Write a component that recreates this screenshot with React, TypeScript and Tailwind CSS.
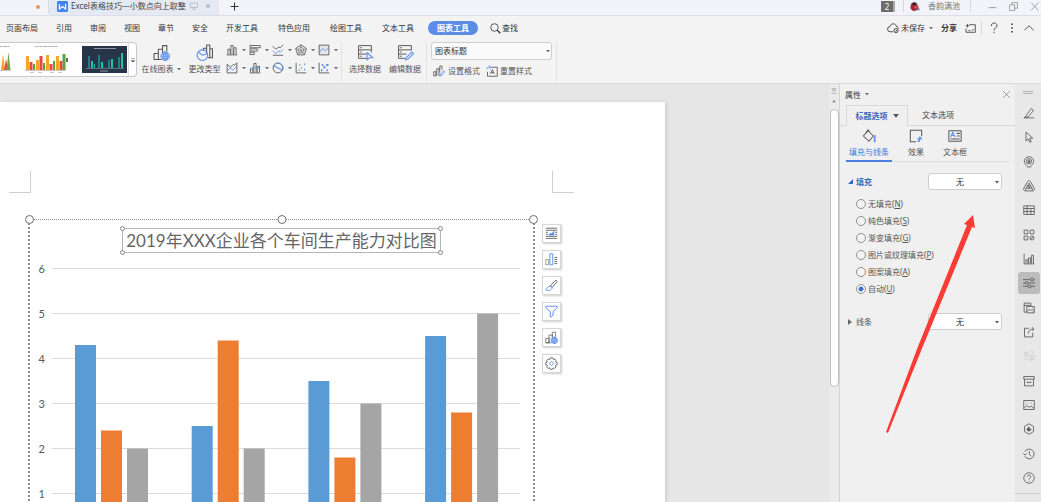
import { useState, type ReactNode } from 'react';

interface IconProps {
  children: ReactNode;
  className?: string;
}

function Icon({ children, className = 'size-3' }: IconProps) {
  return (
    <svg
      viewBox="0 0 16 16"
      fill="none"
      stroke="currentColor"
      strokeWidth={1.15}
      strokeLinejoin="round"
      className={`shrink-0 ${className}`}
      aria-hidden="true"
    >
      {children}
    </svg>
  );
}

function Caret({ className = 'w-1 text-gray-500' }: { className?: string }) {
  return (
    <svg viewBox="0 0 8 5" className={`shrink-0 ${className}`} aria-hidden="true">
      <path d="M0 0h8L4 5z" fill="currentColor" />
    </svg>
  );
}

const blue = '#5b8def';

const menuLeft = ['页面布局', '引用', '审阅', '视图', '章节', '安全'];
const menuRight = ['开发工具', '特色应用', '绘图工具', '文本工具'];

const chartTypes: { name: string; icon: ReactNode }[] = [
  { name: '柱形图', icon: <path d="M1 14.500h14M2.500 14V7h3v7M6.500 14V2h3v12M10.500 14V5h3v9" /> },
  { name: '条形图', icon: <path d="M1.500 1v14M2 2h13v3H2M2 6.500h9v3H2M2 11h5v3H2" /> },
  {
    name: '折线图',
    icon: (
      <>
        <path d="M1 3l4 4 4-3 2 1 4-4" />
        <path d="M1 9l4 4 4-4 2 2 4-4" stroke={blue} />
        <path d="M1 15h14" />
      </>
    ),
  },
  {
    name: '雷达图',
    icon: (
      <>
        <path d="M8 1l7 5-2.500 8.500h-9L1 6z" />
        <path d="M8 4l4 3-1.500 5h-5L4 7zM8 1v8M15 6L8 9M1 6l7 3M3.500 14.500L8 9l4.500 5.500" strokeWidth={0.8} />
      </>
    ),
  },
  {
    name: '组合图',
    icon: (
      <>
        <path d="M1.500 1.500h13v13h-13z" fill="#e6e6e6" />
        <path d="M2 11l4-5 4 3 4-4" stroke={blue} />
      </>
    ),
  },
  {
    name: '面积图',
    icon: (
      <>
        <path d="M1.500 14.500V3L6 7l4-4 1.500 1.500L14.500 1v13.500z" />
        <path d="M2 11l4-3 3 3 5-5" stroke={blue} />
      </>
    ),
  },
  {
    name: '簇状图',
    icon: (
      <>
        <path d="M1 14.500h14M2 14V9h3v5M6.500 14V2h3v12M11 14V6h3v8" />
        <path d="M1 10l5-4 5 4 4-5" stroke={blue} />
      </>
    ),
  },
  {
    name: '饼图',
    icon: (
      <>
        <circle cx="8" cy="8" r="6.500" />
        <path d="M2 5l6 3 6 3M8 1.500A6.500 6.500 0 0 1 14 11L8 8 2 5a6.500 6.500 0 0 1 6-3.500" stroke={blue} />
      </>
    ),
  },
  {
    name: '散点图',
    icon: (
      <>
        <path d="M1.500 1v13.500H15" />
        <path d="M5 11h1.500M8 8h1.500M12 10h1.500M6 4h1.500M12 3h1.500" stroke={blue} strokeWidth={1.800} />
      </>
    ),
  },
  {
    name: '气泡图',
    icon: (
      <>
        <path d="M1.500 1v13.500H15" />
        <path d="M4 11h2M7 7h3M11 11h2M5 4h2M11 4h3" stroke={blue} strokeWidth={2.400} />
      </>
    ),
  },
];

const onlineChart = (
  <>
    <path d="M1 14.500V9h4v5.500zM5 14.500V5h4v5M9 7V1.500h4V7M1 14.500h7" strokeWidth={1} />
    <g stroke={blue} strokeWidth={0.900}>
      <circle cx="11.500" cy="11.500" r="4" fill="#dfe9fc" />
      <path d="M7.500 11.500h8M11.500 7.500v8M8.500 9.500h6M8.500 13.500h6" />
      <ellipse cx="11.500" cy="11.500" rx="2" ry="4" />
    </g>
  </>
);

const changeType = (
  <>
    <path d="M7 6V4h3v5M10 5V1h3v12M13 4.500h2.500V13H11" strokeWidth={1} />
    <g stroke={blue} strokeWidth={1}>
      <circle cx="6" cy="10.500" r="5" />
      <path d="M2 7.500l4 3 5-1.500" />
    </g>
  </>
);

const selectData = (
  <>
    <path d="M9 13.500H1.500v-12h12V8M1.500 5.500h12M1.500 9.500H9M3 3.500h1.500M3 7.500h1.500M3 11.500h1.500" strokeWidth={0.9} />
    <path d="M9.500 8v7l2-2h3.500z" stroke={blue} fill="#f3f3f3" strokeWidth={1} />
  </>
);

const editData = (
  <>
    <path d="M8 13.500H1.500v-12h12V6M1.500 5.500h12M1.500 9.500H9M3 3.500h1.500M3 7.500h1.500M3 11.500h1.500" strokeWidth={0.9} />
    <path d="M8 15l1-2.500 5-5L15.500 9l-5 5z" stroke={blue} fill="#f3f3f3" strokeWidth={1} />
  </>
);

const floatTools: { name: string; icon: ReactNode }[] = [
  {
    name: '布局选项',
    icon: (
      <>
        <path d="M1 1.500h14M1 4h14M1 6.500h2.500M12.500 6.500H15M1 9h2.500M12.500 9H15M1 11.500h14M1 14h14" />
        <path d="M5 10c1-4 3 0 6-5v5z" stroke={blue} fill={blue} strokeWidth={0.600} />
      </>
    ),
  },
  {
    name: '图表元素',
    icon: (
      <>
        <path d="M1 14.500V8h3.500v6.500z" stroke="#999" />
        <path d="M6 14.500V1h3.500v13.500z" stroke={blue} />
        <path d="M11.500 5.500H15M11.500 8H15M11.500 10.500H15M11.500 13H15" />
      </>
    ),
  },
  {
    name: '图表样式',
    icon: (
      <>
        <path d="M6.500 8.500L12.500 2c1-1 3 0 2 1.500L9 10.500z" />
        <path d="M6.500 8.500c-3 0-3 2.500-5.500 5 3 1.500 7 .5 8-3z" stroke={blue} />
      </>
    ),
  },
  { name: '图表筛选器', icon: <path d="M1 1.500h14v2L10 8v4.500L6.500 15V8L1 3.500z" stroke={blue} /> },
  { name: '在线图表', icon: onlineChart },
  {
    name: '设置图表区域格式',
    icon: (
      <>
        <path d="M6.500 1h3l.7 2 2-.5 1.500 2-.7 1.700 2 .8v2.500l-2 .8.7 2-1.800 1.700-2-.6-.7 1.800h-2.700l-.8-1.900-2 .7-1.700-1.800.8-1.900-1.800-.8V7l1.800-.7L2 4.300l1.900-1.700 2 .6z" />
        <path d="M8 5.200L10.800 8 8 10.800 5.200 8z" stroke={blue} />
      </>
    ),
  },
];

const railTools: { name: string; icon: ReactNode; active?: boolean; disabled?: boolean }[] = [
  { name: '样式', icon: <path d="M1 14.500h14M4 11.500L11 2l3 2.500-7 8.500-5 1zM5 14l2-1" /> },
  { name: '选择', icon: <path d="M4 1.500v12l3-3 2 4.500 2-1-2-4.500h4z" /> },
  {
    name: '推荐',
    icon: (
      <>
        <path d="M5 14.500h6M5.500 12.800a6.200 6.200 0 1 1 5 0" />
        <circle cx="8" cy="7" r="3.500" />
        <path d="M8 5l.7 1.400 1.500.2-1.100 1 .3 1.500L8 8.400l-1.400.7.3-1.500-1.100-1 1.500-.2z" fill="currentColor" strokeWidth={0.500} />
      </>
    ),
  },
  {
    name: '形状',
    icon: (
      <>
        <path d="M8 1c1.500 0 2 1 2.500 2L15 11c.7 2-.5 3.500-2 3.500H3c-1.500 0-2.700-1.500-2-3.500l4.500-8C6 2 6.500 1 8 1z" />
        <path d="M8 4L4 11h8zM6 7.500h4M6 7.500L8 11l2-3.500M3 11l1 3M13 11l-1 3" />
      </>
    ),
  },
  { name: '表格', icon: <path d="M1 2.500h14v11.500H1zM1 6h14M1 10h14M5.500 2.500V14M10.500 6v8" /> },
  {
    name: '应用',
    icon: (
      <>
        <path d="M1.500 1.500h5v5h-5zM9.500 1.500h5v5h-5zM1.500 9.500h5v5h-5z" />
        <circle cx="12" cy="12" r="2.700" />
        <path d="M10 14l4-4" />
      </>
    ),
  },
  { name: '图表', icon: <path d="M1.500 1v13.500H15M4 14V9h2.500v5M7.500 14V6.500H10V14M11.500 14V3H14v11" /> },
  {
    name: '属性',
    active: true,
    icon: (
      <>
        <path d="M0 3.500h10M14 3.500h2M0 8h3M7 8h9M0 12.500h7M11 12.500h5" />
        <circle cx="12" cy="3.500" r="2" />
        <circle cx="5" cy="8" r="2" />
        <circle cx="9" cy="12.500" r="2" />
      </>
    ),
  },
  { name: '素材', icon: <path d="M4 13.500H1.500v-12h9V5M1.500 4.500h9M5 6h10v8.500H5zM5.500 13l3-3.500 2 2 1.500-1.500 3 3M12.500 8.200h.8" /> },
  { name: '分享', icon: <path d="M8 3H2v11.500h11V9M7 10c0-4 3-6 7.500-6M12 1.500L14.500 4 12 6.500" /> },
  { name: '翻译', disabled: true, icon: <path d="M1 3h5v5H2V5.500h4M8 8h7v4H8zM11.500 6v9M10 2h3v3M3 10v3h3" /> },
  { name: '归档', icon: <path d="M1 2h14v3.500H1zM2 5.500v9h12v-9M5.500 8.500v1.500h5V8.500" /> },
  { name: '图片', icon: <path d="M1 2h14v12H1zM1.500 12.500L5 8.500l3 2.500 3-1.500 3.500 3M5 5.500h1M10.500 5.500h1" /> },
  {
    name: '安全',
    icon: (
      <>
        <path d="M8 1l6 3.500v7L8 15l-6-3.500v-7z" />
        <path d="M5 9l3-4v2.500l3 1L8 11z" fill="currentColor" />
      </>
    ),
  },
  { name: '历史', icon: <path d="M2.500 5A6.500 6.500 0 1 1 2.500 11M.5 7l2 2.500L5 7.500M8.500 4v4.500L11 11" /> },
  {
    name: '帮助',
    icon: (
      <>
        <circle cx="8" cy="8" r="7" />
        <path d="M5.800 6.300c0-3 4.500-3 4.500 0C10.300 8 8 8 8 10M8 11.500v1.200" />
      </>
    ),
  },
];

const fillOptions: [string, string][] = [
  ['无填充', 'N'],
  ['纯色填充', 'S'],
  ['渐变填充', 'G'],
  ['图片或纹理填充', 'P'],
  ['图案填充', 'A'],
  ['自动', 'U'],
];

const series = [
  { color: '#5b9bd5', values: [4.3, 2.5, 3.5, 4.5] },
  { color: '#ed7d31', values: [2.4, 4.4, 1.8, 2.8] },
  { color: '#a5a5a5', values: [2, 2, 3, 5] },
];

function TitleBar() {
  return (
    <header className="flex h-4 shrink-0 items-start border-b border-[#dcdfe8] bg-[#f2f4f9] text-[#444]">
      <div className="flex h-[13px] w-[49px] items-center justify-end border-r border-[#d8dbe4] pr-2">
        <span className="size-1 rounded-full bg-[#e8975a]" />
      </div>
      <div className="flex h-[15px] w-[170px] items-center bg-[#e5e9f3] pb-[3px] pl-2">
        <svg viewBox="0 0 16 16" className="mr-[3px] size-[11px] shrink-0" aria-hidden="true">
          <rect width="16" height="16" rx="2" fill="#3f86f0" />
          <path d="M3.500 4.500v7L8 8l4.500 3.500v-7" fill="none" stroke="#fff" strokeWidth="1.800" />
        </svg>
        <span className="whitespace-nowrap">Excel表格技巧---小数点向上取整</span>
        <Icon className="ml-1 size-2 text-gray-400">
          <path d="M1 2h14v9H1zM8 11v3M5 14.500h6" />
        </Icon>
        <span className="ml-2 size-1 rounded-full bg-[#b9bdc8]" />
      </div>
      <button type="button" aria-label="新建" className="ml-[11px] h-3">
        <Icon className="size-[9px] text-[#333]">
          <path d="M8 1v14M1 8h14" strokeWidth={1.800} />
        </Icon>
      </button>
      <div className="ml-auto flex h-3 items-center">
        <span className="h-[11px] w-3 bg-[#6d6d6d] text-center text-white">2</span>
        <span className="mr-2 h-[11px] w-[2px] bg-[#a8a8a8]" />
        <span className="h-3 border-l border-[#d5d8e0]" />
        <svg viewBox="0 0 16 16" className="ml-[5px] size-[11px]" aria-hidden="true">
          <circle cx="8" cy="8" r="7.500" fill="#dfe3ee" />
          <path d="M3 5c1-4 8-4 9 0l2 5-4 4H5L2 10z" fill="#a3282f" />
          <path d="M4 4c2-3 6-2 7 0L8 7z" fill="#2d2431" />
          <circle cx="10" cy="9" r="2" fill="#e8535a" />
          <path d="M11 12l4-2v4z" fill="#4779c4" />
        </svg>
        <span className="ml-2 text-[#777]">香韵满池</span>
        <span className="ml-[10px] h-3 border-l border-[#d5d8e0]" />
        <div className="ml-[17px] mr-[2px] flex items-center gap-3 text-[#777]">
          <button type="button" aria-label="最小化">
            <Icon className="size-[9px]"><path d="M1 10h14" /></Icon>
          </button>
          <button type="button" aria-label="还原">
            <Icon className="size-[9px]"><path d="M1 5h9v10H1zM5 5V1h10v10h-5" /></Icon>
          </button>
          <button type="button" aria-label="关闭">
            <Icon className="size-[9px]"><path d="M2 1l13 14M15 1L2 15" /></Icon>
          </button>
        </div>
      </div>
    </header>
  );
}

function MenuBar() {
  return (
    <nav className="flex h-6 shrink-0 items-center whitespace-nowrap pl-[6px] text-[#333]">
      <div className="flex gap-[18px]">
        {menuLeft.map((m) => (
          <button type="button" key={m}>{m}</button>
        ))}
      </div>
      <div className="ml-[18px] flex gap-5">
        {menuRight.map((m) => (
          <button type="button" key={m}>{m}</button>
        ))}
      </div>
      <button type="button" className="ml-[14px] h-[14px] rounded-full bg-[#5b8de6] px-[9px] font-bold text-white">
        图表工具
      </button>
      <button type="button" className="ml-3 flex items-center gap-px">
        <Icon className="size-[11px]">
          <circle cx="6.500" cy="6.500" r="5.500" />
          <path d="M10.500 10.500L15 15" strokeWidth={1.800} />
        </Icon>
        查找
      </button>
      <div className="ml-auto flex items-center pr-[6px]">
        <button type="button" className="flex items-center gap-[2px]">
          <Icon>
            <path d="M8 13H4.500a3.500 3.500 0 0 1-.5-7c1-5 8-4.500 8.500 0 1.500 0 2.500 1.500 2.500 3" />
            <circle cx="12" cy="11.500" r="2.800" />
            <path d="M10.800 11.500l1 1 1.500-1.800" />
          </Icon>
          未保存
          <Caret className="ml-[2px] w-1 text-gray-500" />
        </button>
        <button type="button" className="ml-2 font-bold">分享</button>
        <button type="button" aria-label="批注" className="ml-2">
          <Icon className="size-[11px]">
            <path d="M6 2.500h9v11H1.500V8M1 4h5M3.500 1.500v5M5 11h3M10 11l3-2" />
          </Icon>
        </button>
        <span className="ml-[5px] h-[14px] border-l border-[#d9d9d9]" />
        <button type="button" aria-label="帮助" className="ml-[6px]">
          <Icon>
            <path d="M4.500 5.500c0-6 7.500-5 7.500-.5 0 3-4 2.500-4 6M8 13v2" />
          </Icon>
        </button>
        <button type="button" aria-label="更多" className="ml-[6px]">
          <Icon>
            <path d="M8 2v2M8 7v2M8 12v2" strokeWidth={2} />
          </Icon>
        </button>
        <button type="button" aria-label="收起功能区" className="ml-[5px]">
          <Icon>
            <path d="M2 11l6-6 6 6" />
          </Icon>
        </button>
      </div>
    </nav>
  );
}

function Gallery() {
  return (
    <div className="flex h-[35px] w-[137px] shrink-0 items-center overflow-hidden rounded-r border border-l-0 border-[#c9c9c9] bg-white">
      <svg viewBox="0 0 128 33" className="h-[33px] w-[128px]" aria-hidden="true">
        <path d="M1 27l2-16 2 16z" fill="#f5a623" />
        <path d="M4 27l2-11 2 11z" fill="#e64646" />
        <path d="M6.500 27l2-18 2 18z" fill="#6aa84f" />
        <path d="M0 3.500h10M35 3.500h23" stroke="#999" strokeWidth="0.800" strokeDasharray="2 0.500" />
        <path d="M25 27.500h41M0 27.500h11M30 29.500h4M38 29.500h4M50 29.500h4M58 29.500h4" stroke="#bbb" strokeWidth="0.800" />
        <path d="M67 15v4" stroke="#666" strokeWidth="2" />
        <path d="M26 27V13h3v14M36 27V17h3v10M46 27V12h3v15M56 27V13h3v14" fill="#f5a623" />
        <path d="M29.500 27v-8h3v8M39.500 27V13h3v14M49.500 27v-6h3v6M59.500 27v-9h3v9" fill="#e64646" />
        <path d="M33 27v-6h2v6M43 27v-7h2v7M53 27v-9h2v9M62.500 27V11h3v16" fill="#5da33a" />
        <rect x="82" y="3" width="45" height="27" fill="#273549" />
        <path d="M94 5.500h22M100 28h8" stroke="#a8b0bd" strokeWidth="0.800" />
        <path d="M86 25.500h38" stroke="#8a93a3" strokeWidth="0.600" />
        <path d="M88 25V13h2v12M98 25V12h2v13M108 25v-8h2v8M118 25V14h2v11" fill="#1f7f86" />
        <path d="M91 25v-7h2v7M94 25v-4h1v4M101 25v-6h2v6M111 25v-9h2v9M121 25V10h2v15" fill="#1fc3ac" />
      </svg>
      <button type="button" aria-label="更多样式" className="flex h-full flex-1 items-center justify-center border-l border-[#e0e0e0]">
        <Icon className="size-[6px]">
          <path d="M3 4h10M3 9h10l-5 5z" fill="currentColor" />
        </Icon>
      </button>
    </div>
  );
}

function BigButton({ icon, label, menu, className }: { icon: ReactNode; label: string; menu?: boolean; className: string }) {
  return (
    <button type="button" className={`flex shrink-0 flex-col items-center gap-[2px] whitespace-nowrap pt-[2px] ${className}`}>
      <Icon className="size-[17px]">{icon}</Icon>
      <span className="flex items-center gap-[3px]">
        {label}
        {menu && <Caret className="w-1 text-gray-500" />}
      </span>
    </button>
  );
}

function Ribbon() {
  return (
    <section className="flex h-11 shrink-0 items-start border-b border-[#d8d8d8] pt-[2px] text-[#555]">
      <Gallery />
      <BigButton icon={onlineChart} label="在线图表" menu className="w-12" />
      <BigButton icon={changeType} label="更改类型" className="w-[39px]" />
      <div className="ml-[2px] grid grid-cols-5 gap-y-[6px] pt-[2px]">
        {chartTypes.map((c) => (
          <button type="button" key={c.name} aria-label={c.name} className="flex h-3 w-[23px] items-center gap-1">
            <Icon>{c.icon}</Icon>
            <Caret className="w-1 text-gray-500" />
          </button>
        ))}
      </div>
      <span className="h-[39px] border-l border-[#e2e2e2]" />
      <BigButton icon={selectData} label="选择数据" className="ml-[3px] w-10" />
      <BigButton icon={editData} label="编辑数据" className="w-10" />
      <span className="ml-px h-[39px] border-l border-[#e2e2e2]" />
      <div className="ml-1 w-[121px]">
        <div className="relative">
          <select
            aria-label="图表元素"
            className="block h-[18px] w-full appearance-none rounded-[3px] border border-[#cfcfcf] bg-[#fafafa] pl-[3px] text-[#333]"
          >
            <option>图表标题</option>
            <option>图表区</option>
          </select>
          <Caret className="pointer-events-none absolute right-[2px] top-2 w-1 text-gray-500" />
        </div>
        <div className="mt-[5px] flex gap-[6px] pl-[2px]">
          <button type="button" className="flex items-center gap-[3px]">
            <Icon>
              <path d="M1 14.500V9h3v5.500zM5 14.500V5h3v9.500M9 9V1.500h3V6" />
              <path d="M9 15l1-3 4-4.500 1.500 1.500-4 5z" stroke={blue} />
            </Icon>
            设置格式
          </button>
          <button type="button" className="flex items-center gap-[2px]">
            <Icon>
              <path d="M7 3h8v12H2V9M6 12l2.500-6L11 12M7 10h3" />
              <path d="M1 6c0-3 3-4 5-3M4 .5L6.500 3 4 5" stroke={blue} />
            </Icon>
            重置样式
          </button>
        </div>
      </div>
      <span className="ml-1 h-[39px] border-l border-[#e2e2e2]" />
    </section>
  );
}

function ChartPlot() {
  const y = (v: number) => 285.5 - v * 45;

  return (
    <svg viewBox="0 0 503 300" className="block w-full font-['Lato']" role="img" aria-label="各车间生产能力">
      {[1, 2, 3, 4, 5, 6].map((v) => (
        <g key={v}>
          <path d={`M22 ${y(v)}H490`} stroke="#dcdcdc" />
          <text x="15" y={y(v) + 4} textAnchor="end" fontSize="11" fill="#595959">{v}</text>
        </g>
      ))}
      {series.map((s, i) =>
        s.values.map((v, j) => (
          <rect key={`${i}-${j}`} x={45 + j * 116.7 + i * 26} y={y(v)} width={21} height={v * 45} fill={s.color} />
        )),
      )}
    </svg>
  );
}

const titleHandles = ['-left-[3px] -top-[3px]', '-right-[3px] -top-[3px]', '-left-[3px] -bottom-[3px]', '-right-[3px] -bottom-[3px]'];
const frameHandles = ['-left-[5px]', 'left-1/2 -translate-x-1/2', '-right-[5px]'];

function DocumentCanvas() {
  return (
    <main className="min-w-0 flex-1 overflow-hidden bg-[#e6e6e6] pt-[18px]">
      <article className="h-full w-[665px] overflow-hidden bg-white pl-[9px] pt-[69px] shadow-[2px_0_3px_#cfcfcf]">
        <div className="flex w-[565px] justify-between">
          <span className="size-[22px] border-b border-r border-[#cfcfcf]" />
          <span className="size-[22px] border-b border-l border-[#cfcfcf]" />
        </div>
        <div className="mt-[26px] flex items-start pl-[19px]">
          <div className="relative w-[507px] border-x-2 border-t border-dotted border-[#8c8c8c] pt-2">
            {frameHandles.map((pos) => (
              <span key={pos} className={`absolute -top-[5px] size-[9px] rounded-full border border-[#6f6f6f] bg-white ${pos}`} />
            ))}
            <div className="relative mx-auto h-[25px] w-fit border border-[#b5b5bf] px-[3px]">
              <h1 className="whitespace-nowrap font-['Lato','Noto_Sans_CJK_SC',sans-serif] text-[17px] leading-6 text-[#666]">
                2019年XXX企业各个车间生产能力对比图
              </h1>
              {titleHandles.map((pos) => (
                <span key={pos} className={`absolute size-[5px] rounded-full border border-[#888] bg-white ${pos}`} />
              ))}
            </div>
            <ChartPlot />
          </div>
          <div className="ml-[7px] mt-[5px] flex flex-col gap-[7px]">
            {floatTools.map((t) => (
              <button
                type="button"
                key={t.name}
                aria-label={t.name}
                className="flex size-[19px] items-center justify-center border border-[#d6d6d6] bg-white text-[#666] shadow-[1px_1px_2px_#ccc]"
              >
                <Icon className="size-[13px]">{t.icon}</Icon>
              </button>
            ))}
          </div>
        </div>
      </article>
    </main>
  );
}

function ScrollTrack() {
  return (
    <div className="flex w-[11px] shrink-0 flex-col items-center border-r border-[#d2d2d2] bg-[#ebebeb] pt-1 text-[#777]">
      <Icon className="size-[6px]">
        <path d="M1 1h14M3 5h10l-5 4zM1 14h14" />
      </Icon>
      <Caret className="mt-[6px] w-1 rotate-180" />
      <span className="mt-[6px] h-[278px] w-[9px] rounded-full border border-[#bdbdbd] bg-white" />
    </div>
  );
}

function NoneSelect({ label }: { label: string }) {
  return (
    <div className="relative ml-auto w-[74px]">
      <select
        aria-label={label}
        className="block h-[17px] w-full appearance-none rounded-[3px] border border-[#cdcdcd] bg-white pr-[10px] text-[#333] [text-align-last:center]"
      >
        <option>无</option>
        <option>实线</option>
      </select>
      <Caret className="pointer-events-none absolute right-[3px] top-2 w-1 text-gray-600" />
    </div>
  );
}

function PropertiesPanel() {
  const [fill, setFill] = useState('U');

  return (
    <aside className="relative w-[175px] shrink-0 bg-[#f0f0f0] text-[#555]">
      <div className="flex h-[21px] items-center pl-[5px] pr-1 text-[#333]">
        属性
        <Caret className="ml-1 w-1 text-gray-500" />
        <button type="button" aria-label="关闭窗格" className="ml-auto">
          <Icon className="size-[9px] text-gray-500">
            <path d="M2 2l12 12M14 2L2 14" />
          </Icon>
        </button>
      </div>

      <div className="flex h-[21px]">
        <span className="w-[6px] border-b border-[#d9d9d9]" />
        <button type="button" className="flex w-[62px] items-center justify-center gap-[5px] border border-b-0 border-[#d9d9d9] font-bold text-[#3569bd]">
          标题选项
          <Caret className="w-[6px] text-gray-600" />
        </button>
        <button type="button" className="flex-1 border-b border-[#d9d9d9] pl-[14px] text-left text-[#444]">文本选项</button>
      </div>

      <div className="mx-[6px] flex h-9 border-b border-[#dcdcdc] pt-[3px]">
        <button type="button" className="-mb-px flex w-[46px] flex-col items-center gap-[3px] border-b-2 border-[#4a7fe0] text-[#3d78dc]">
          <Icon className="size-[14px] text-[#555]">
            <path d="M7 2l6 6-5 6-6.500-6zM4 5l3-4 2 3" />
            <path d="M14.500 7v8" stroke={blue} strokeWidth={2} />
          </Icon>
          填充与线条
        </button>
        <button type="button" className="ml-3 flex w-6 flex-col items-center gap-[3px]">
          <Icon className="size-[14px]">
            <path d="M8 14.500H1.500v-13h13V8" />
            <path d="M12 8.500v6M9 11.500h6M10 15l4-6" stroke={blue} />
          </Icon>
          效果
        </button>
        <button type="button" className="ml-[15px] flex w-6 flex-col items-center gap-[3px] whitespace-nowrap">
          <Icon className="size-[14px]">
            <path d="M1 2h14v12H1zM10 5h3.500M10 8h3.500M3 11.500h10.500" />
            <path d="M3 9.500l2.500-6 2.500 6M4 7.500h3" stroke={blue} />
          </Icon>
          文本框
        </button>
      </div>

      <div className="mt-[11px] flex items-center pl-2 pr-[13px]">
        <svg viewBox="0 0 6 6" className="size-[5px]" aria-hidden="true">
          <path d="M6 0v6H0z" fill="#3569bd" />
        </svg>
        <span className="ml-[3px] font-bold text-[#3569bd]">填充</span>
        <NoneSelect label="填充" />
      </div>

      <fieldset aria-label="填充方式" className="mt-[5px] pl-4">
        {fillOptions.map(([label, key]) => (
          <label key={key} className="flex h-[17px] items-center gap-[2px]">
            <input
              type="radio"
              name="fill"
              value={key}
              checked={fill === key}
              onChange={() => setFill(key)}
              className="size-[10px] appearance-none rounded-full border border-[#8f8f8f] bg-[#f4f4f4] checked:bg-[radial-gradient(circle,#3f72c8_2px,#fff_3px)]"
            />
            <span>
              {label}(<u>{key}</u>)
            </span>
          </label>
        ))}
      </fieldset>

      <div className="mt-4 flex items-center pl-2 pr-[13px]">
        <svg viewBox="0 0 4 6" className="h-[6px] w-1" aria-hidden="true">
          <path d="M0 0l4 3-4 3z" fill="#666" />
        </svg>
        <span className="ml-1">线条</span>
        <NoneSelect label="线条" />
      </div>

      {/* pointer from the panel body up to the fill selector */}
      <svg viewBox="0 0 90 220" className="pointer-events-none absolute left-[46px] top-[131px] w-[90px]" aria-hidden="true">
        <path d="M87 0l2 13-3-1L35 136 2 218l-2-1L31 134 81 10l-3-1z" fill="#fb3b35" />
      </svg>
    </aside>
  );
}

function SideRail() {
  return (
    <aside className="flex w-[26px] shrink-0 flex-col items-center bg-[#e8e8e8] pb-2 text-[#5c5c5c]">
      <span className="mt-[7px] h-[3px] w-[10px] shrink-0 border-y border-[#b5b5b5]" />
      <div className="mt-2 flex min-h-0 w-full flex-1 flex-col items-center justify-between border-b border-[#d0d0d0] pb-1">
        {railTools.map((t) => (
          <button
            type="button"
            key={t.name}
            aria-label={t.name}
            disabled={t.disabled}
            className={`ml-[2px] flex size-[22px] items-center justify-center rounded-[3px] disabled:text-[#cfcfcf] ${t.active ? 'bg-[#bcbcbc]' : ''}`}
          >
            <Icon>{t.icon}</Icon>
          </button>
        ))}
      </div>
    </aside>
  );
}

export default function App() {
  return (
    <div className="flex h-screen flex-col overflow-hidden bg-[#f3f3f3] font-['Noto_Sans','Noto_Sans_CJK_SC',sans-serif] text-[8px] leading-3">
      <TitleBar />
      <MenuBar />
      <Ribbon />
      <div className="flex min-h-0 flex-1">
        <DocumentCanvas />
        <ScrollTrack />
        <PropertiesPanel />
        <SideRail />
      </div>
    </div>
  );
}
